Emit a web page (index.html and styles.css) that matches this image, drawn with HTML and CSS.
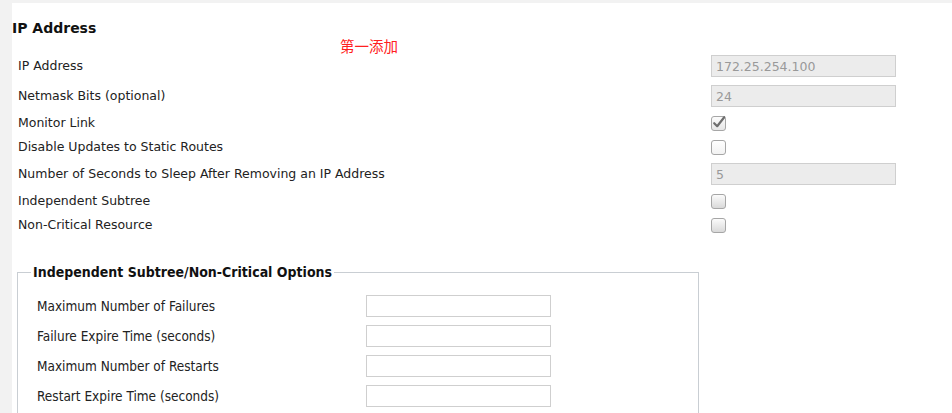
FILE: index.html
```html
<!DOCTYPE html>
<html>
<head>
<meta charset="utf-8">
<link rel="stylesheet" href="styles.css">
</head>
<body>
<div class="panel">
  <h2 class="title">IP Address</h2>
  <span class="note">第一添加</span>
  <div class="form">
    <div class="row tall"><span class="label">IP Address</span><input class="field ro" type="text" value="172.25.254.100" readonly></div>
    <div class="row tall"><span class="label">Netmask Bits (optional)</span><input class="field ro" type="text" value="24" readonly></div>
    <div class="row"><span class="label">Monitor Link</span><span class="cb checked"><svg width="15" height="17" viewBox="0 0 15 17"><path d="M3.2 9.2 L6.2 12.2 L13.2 3.2" fill="none" stroke="#6e6e6e" stroke-width="2.2" stroke-linecap="round" stroke-linejoin="round"/></svg></span></div>
    <div class="row"><span class="label">Disable Updates to Static Routes</span><span class="cb plain"></span></div>
    <div class="row tall"><span class="label">Number of Seconds to Sleep After Removing an IP Address</span><input class="field ro" type="text" value="5" readonly></div>
    <div class="row"><span class="label">Independent Subtree</span><span class="cb"></span></div>
    <div class="row"><span class="label">Non-Critical Resource</span><span class="cb"></span></div>
  </div>
  <fieldset class="opts">
    <legend>Independent Subtree/Non-Critical Options</legend>
    <div class="sub">
      <div class="srow"><span class="slabel">Maximum Number of Failures</span><input class="field" type="text"></div>
      <div class="srow"><span class="slabel">Failure Expire Time (seconds)</span><input class="field" type="text"></div>
      <div class="srow"><span class="slabel">Maximum Number of Restarts</span><input class="field" type="text"></div>
      <div class="srow"><span class="slabel">Restart Expire Time (seconds)</span><input class="field" type="text"></div>
    </div>
  </fieldset>
</div>
</body>
</html>
```
FILE: styles.css
```css
html, body {
  margin: 0;
  padding: 0;
  background: #f2f2f2;
  overflow: hidden;
}
body {
  padding: 3px 0 0 12px;
  height: 410px;
  font-family: "DejaVu Sans", sans-serif;
  font-size: 12.5px;
  color: #222;
}
.panel {
  position: relative;
  background: #fff;
  height: 420px;
  padding-top: 16px;
  box-sizing: border-box;
}
.title {
  margin: 0;
  font-size: 14px;
  line-height: 18px;
  font-weight: bold;
  color: #111;
}
.note {
  position: absolute;
  left: 328px;
  top: 34px;
  font-family: "Noto Sans CJK SC", sans-serif;
  font-size: 14.5px;
  line-height: 18px;
  color: #ff2020;
}
.form {
  margin-top: 14px;
  padding-left: 6px;
}
.row {
  display: grid;
  grid-template-columns: 693px auto;
  align-items: center;
  height: 24px;
}
.row.tall {
  height: 30px;
}
.label {
  line-height: 16px;
}
.field {
  box-sizing: border-box;
  width: 185px;
  height: 22px;
  margin: 0;
  padding: 0 4px;
  border: 1px solid #cfcfcf;
  border-radius: 0;
  background: #fff;
  font-family: "DejaVu Sans", sans-serif;
  font-size: 12.5px;
  color: #444;
  outline: none;
}
.field.ro {
  background: #ececec;
  color: #999;
}
.cb {
  position: relative;
  display: block;
  box-sizing: border-box;
  width: 15px;
  height: 15px;
  border: 1px solid #a6a6a6;
  border-radius: 3px;
  background: linear-gradient(#fbfbfb, #d9d9d9);
}
.cb.plain {
  background: linear-gradient(#ffffff, #f2f2f2);
}
.cb.checked {
  background: linear-gradient(#fcfcfc, #e6e6e6);
}
.cb svg {
  position: absolute;
  left: -1px;
  top: -3px;
}
.opts {
  margin: 27px 0 0 5px;
  width: 682px;
  box-sizing: border-box;
  padding: 0 0 20px 13px;
  border: 1px solid #c9ced3;
}
.opts legend {
  padding: 0 2px;
  font-family: "DejaVu Sans Condensed", "DejaVu Sans", sans-serif;
  font-stretch: condensed;
  font-weight: bold;
  font-size: 14px;
  line-height: 16px;
  color: #111;
}
.sub {
  padding: 11px 0 0 6px;
}
.srow {
  display: grid;
  grid-template-columns: 329px auto;
  align-items: center;
  height: 30px;
}
.slabel {
  font-family: "DejaVu Sans Condensed", "DejaVu Sans", sans-serif;
  font-stretch: condensed;
  font-size: 13.5px;
  line-height: 16px;
}
```
